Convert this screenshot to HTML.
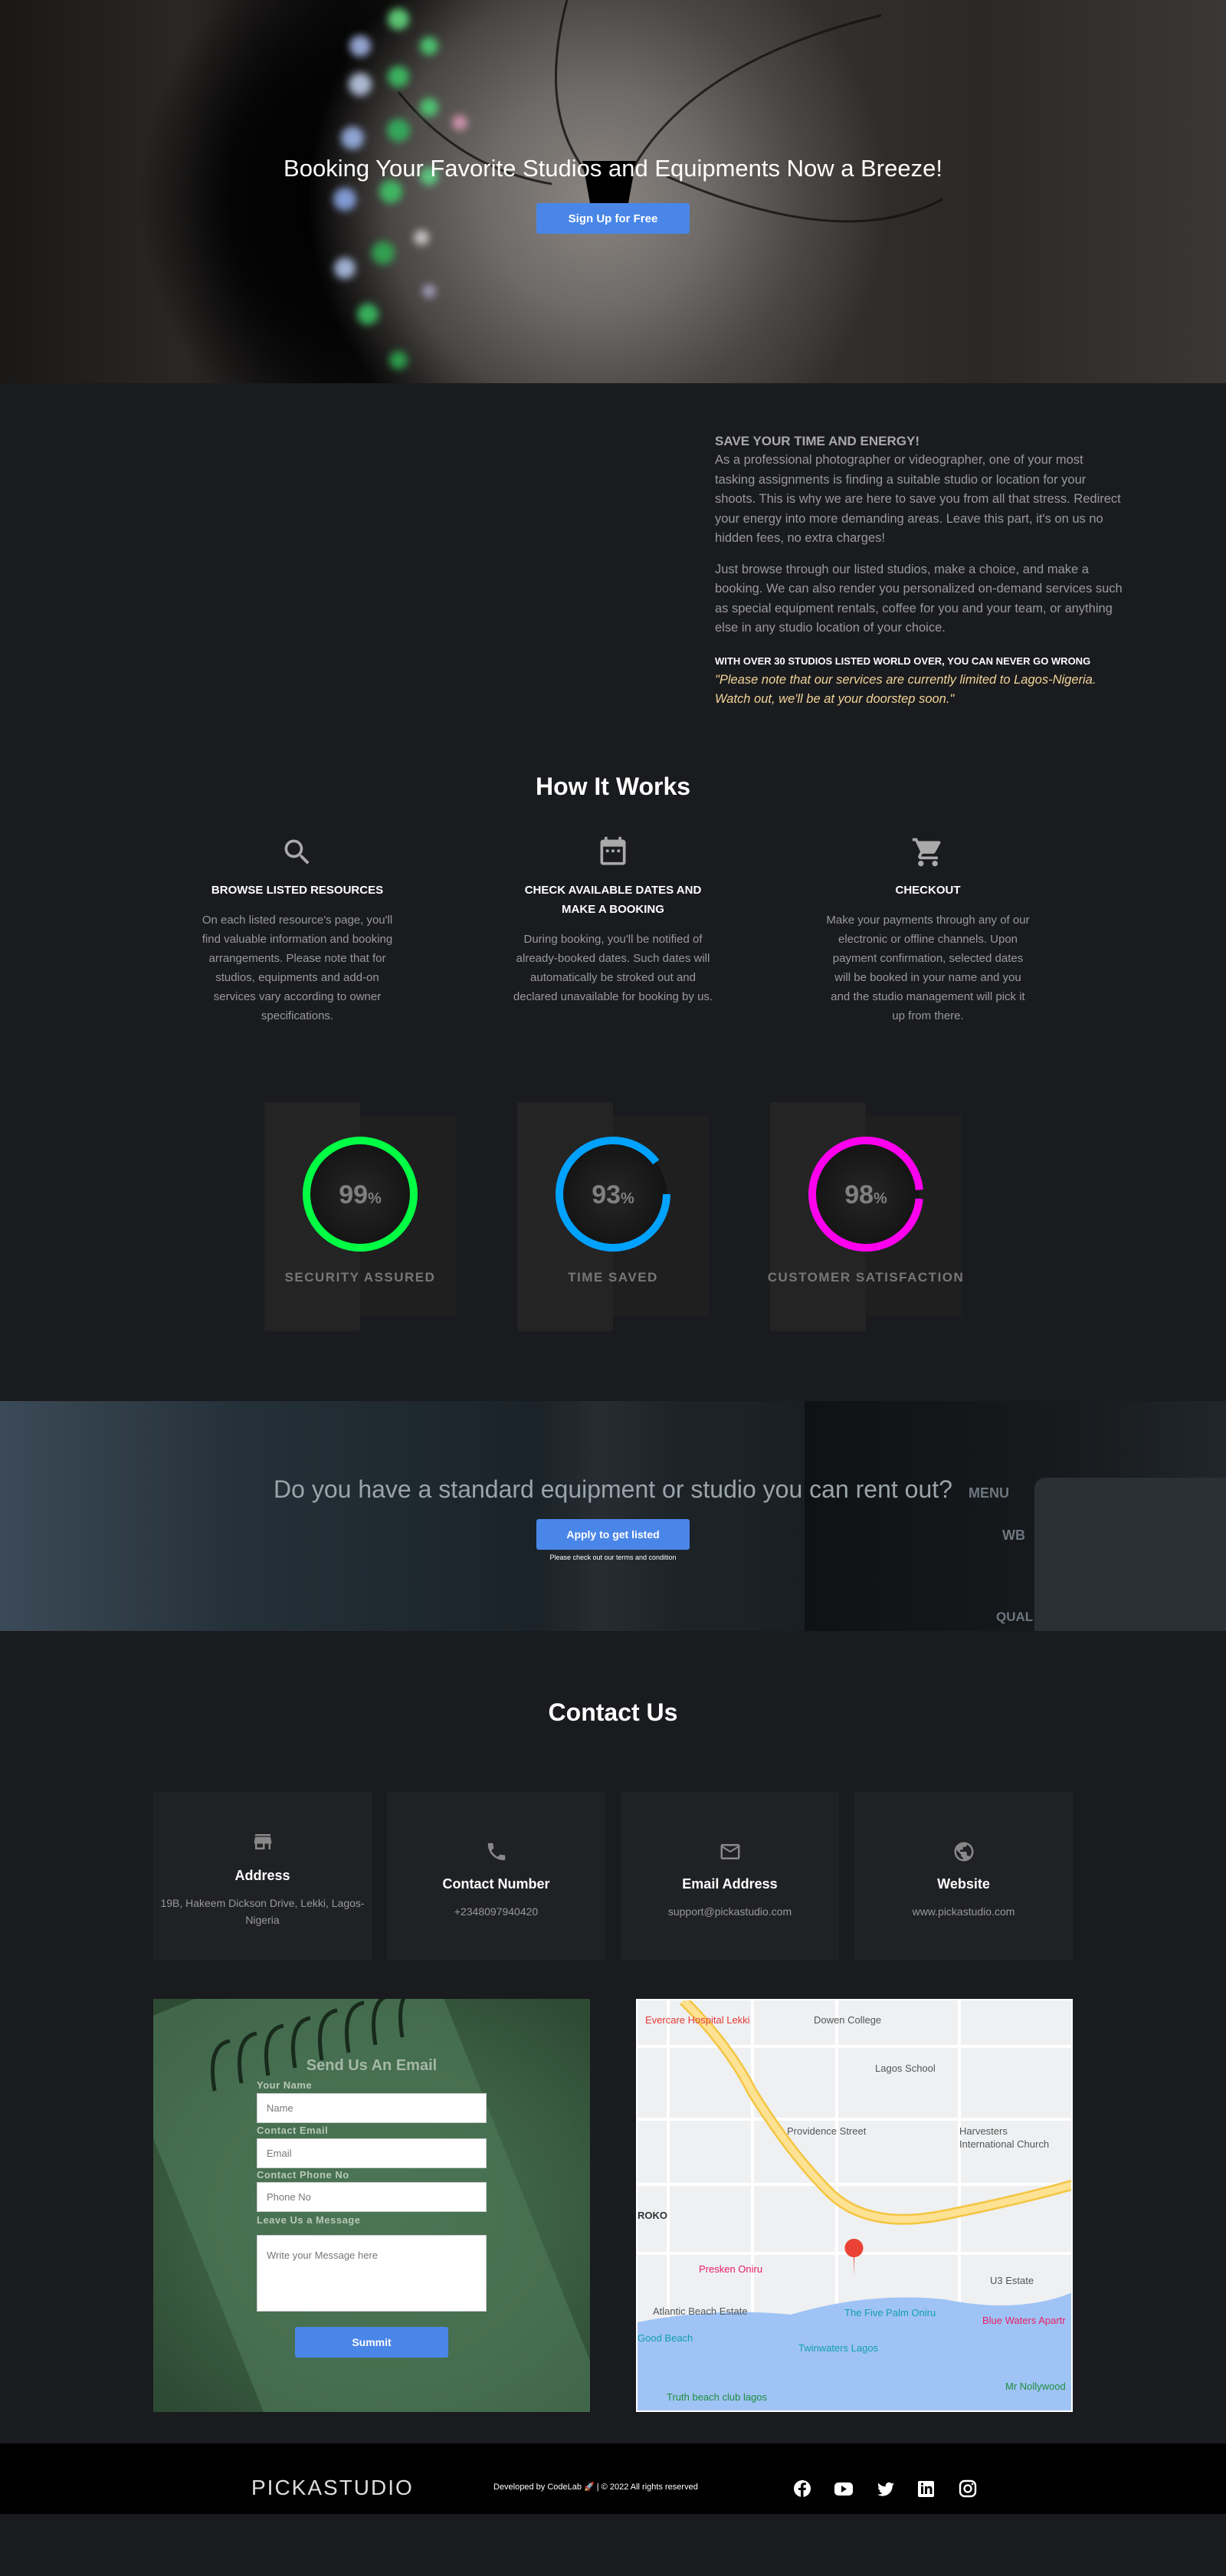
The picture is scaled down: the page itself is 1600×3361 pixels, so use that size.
<!DOCTYPE html>
<html><head><meta charset="utf-8"><style>
*{margin:0;padding:0;box-sizing:border-box}
body{width:1600px;height:3361px;background:#1a1b1e;font-family:"Liberation Sans",sans-serif;position:relative;overflow:hidden;color:#aaa}
.a{position:absolute}
.c{text-align:center}
.btn{position:absolute;background:#4a86e8;color:#fff;font-weight:bold;border-radius:3px;display:flex;align-items:center;justify-content:center;font-size:14px}
.hero{left:0;top:0;width:1600px;height:500px;overflow:hidden;
background:
radial-gradient(ellipse 420px 420px at 780px 260px,#8a8581 0%,#6e6a67 35%,#4a4644 65%,transparent 90%),
radial-gradient(ellipse 300px 330px at 480px 260px,#000 0%,#050505 60%,transparent 100%),
linear-gradient(90deg,#1a1816 0%,#2a2725 15%,#0d0c0c 28%,#3a3634 55%,#2b2826 80%,#3b3735 100%);}
.p{font-size:16.5px;line-height:25.5px;color:#999}
.col h4{color:#fff;font-size:15px;font-weight:bold;line-height:25px;margin-top:10px}
.col p{font-size:15px;line-height:25px;color:#999;margin-top:14px}
.card{position:absolute;top:2338px;width:285px;height:220px;background:#202124;text-align:center}
.card h5{color:#fff;font-size:18px;font-weight:bold}
.card p{color:#999;font-size:14px;line-height:22px;margin-top:14px}
.lbl{position:absolute;left:335px;font-size:13px;font-weight:bold;color:#b8c8b8;letter-spacing:.5px}
.in{position:absolute;left:335px;width:300px;background:#fff;border:1px solid #ccc;font-size:13px;color:#777;padding:0 12px;display:flex;align-items:center}
</style></head><body>

<div class="a hero">
 <svg width="1600" height="500" style="position:absolute;left:0;top:0">
  <defs><filter id="bl"><feGaussianBlur stdDeviation="5"/></filter></defs>
  <g fill="none" stroke="#111" stroke-width="3" opacity=".8">
   <path d="M740 0 Q700 150 770 230"/><path d="M1150 20 Q900 80 820 230"/><path d="M520 120 Q600 220 720 240"/><path d="M870 230 Q1100 330 1230 260"/>
  </g>
  <path d="M760 210 L830 210 L820 265 L770 265Z" fill="#000"/>
  <g opacity=".8" filter="url(#bl)">
   <circle cx="520" cy="25" r="14" fill="#6cf08a"/><circle cx="560" cy="60" r="12" fill="#4fe07a"/><circle cx="470" cy="60" r="14" fill="#b6c8ff"/>
   <circle cx="520" cy="100" r="14" fill="#3ed26a"/><circle cx="470" cy="110" r="15" fill="#d0e0ff"/><circle cx="560" cy="140" r="12" fill="#4fe07a"/>
   <circle cx="520" cy="170" r="15" fill="#2ec060"/><circle cx="460" cy="180" r="15" fill="#aac4ff"/><circle cx="600" cy="160" r="10" fill="#e8a0c0"/>
   <circle cx="510" cy="250" r="15" fill="#3ed26a"/><circle cx="450" cy="260" r="15" fill="#9ab8ff"/><circle cx="560" cy="230" r="12" fill="#5ee08a"/>
   <circle cx="500" cy="330" r="15" fill="#2eb855"/><circle cx="450" cy="350" r="14" fill="#c0d4ff"/><circle cx="550" cy="310" r="10" fill="#ddd"/>
   <circle cx="480" cy="410" r="14" fill="#3ed26a"/><circle cx="520" cy="470" r="12" fill="#2eb855"/><circle cx="560" cy="380" r="9" fill="#aac"/>
  </g>
 </svg>
 <div class="a c" style="left:0;width:1600px;top:202px;font-size:31px;color:#fff">Booking Your Favorite Studios and Equipments Now a Breeze!</div>
 <div class="btn" style="left:700px;top:265px;width:200px;height:40px;font-size:15px">Sign Up for Free</div>
</div>

<div class="a" style="left:933px;top:564px;width:535px">
 <div style="font-size:17px;font-weight:bold;color:#aaa;line-height:24px">SAVE YOUR TIME AND ENERGY!</div>
 <p class="p">As a professional photographer or videographer, one of your most tasking assignments is finding a suitable studio or location for your shoots. This is why we are here to save you from all that stress. Redirect your energy into more demanding areas. Leave this part, it's on us no hidden fees, no extra charges!</p>
 <p class="p" style="margin-top:15px">Just browse through our listed studios, make a choice, and make a booking. We can also render you personalized on-demand services such as special equipment rentals, coffee for you and your team, or anything else in any studio location of your choice.</p>
 <p style="margin-top:17px;font-size:13px;font-weight:bold;color:#fff;line-height:25px">WITH OVER 30 STUDIOS LISTED WORLD OVER, YOU CAN NEVER GO WRONG</p>
 <p class="p" style="font-style:italic;color:#f2d49a">"Please note that our services are currently limited to Lagos-Nigeria. Watch out, we'll be at your doorstep soon."</p>
</div>

<div class="a c" style="left:0;width:1600px;top:1008px;font-size:32px;font-weight:bold;color:#fff">How It Works</div>

<div class="a c col" style="left:258px;top:1090px;width:260px">
 <svg width="44" height="44" viewBox="0 0 24 24"><path fill="#aaa" d="M15.5 14h-.79l-.28-.27A6.47 6.47 0 0 0 16 9.5 6.5 6.5 0 1 0 9.5 16c1.61 0 3.09-.59 4.23-1.57l.27.28v.79l5 4.99L20.49 19l-4.99-5zm-6 0C7.010 14 5 11.99 5 9.5S7.01 5 9.5 5 14 7.01 14 9.5 11.99 14 9.5 14z"/></svg>
 <h4>BROWSE LISTED RESOURCES</h4>
 <p>On each listed resource's page, you'll find valuable information and booking arrangements. Please note that for studios, equipments and add-on services vary according to owner specifications.</p>
</div>
<div class="a c col" style="left:665px;top:1090px;width:270px">
 <svg width="44" height="44" viewBox="0 0 24 24"><path fill="#aaa" d="M19 3h-1V1h-2v2H8V1H6v2H5c-1.1 0-2 .9-2 2v14c0 1.1.9 2 2 2h14c1.1 0 2-.9 2-2V5c0-1.1-.9-2-2-2zm0 16H5V8h14v11zM7 10h2v2H7zm4 0h2v2h-2zm4 0h2v2h-2z"/></svg>
 <h4>CHECK AVAILABLE DATES AND MAKE A BOOKING</h4>
 <p>During booking, you'll be notified of already-booked dates. Such dates will automatically be stroked out and declared unavailable for booking by us.</p>
</div>
<div class="a c col" style="left:1076px;top:1090px;width:270px">
 <svg width="44" height="44" viewBox="0 0 24 24"><path fill="#aaa" d="M7 18c-1.1 0-1.99.9-1.99 2S5.9 22 7 22s2-.9 2-2-.9-2-2-2zM1 2v2h2l3.6 7.59-1.35 2.45c-.16.28-.25.61-.25.96 0 1.1.9 2 2 2h12v-2H7.42c-.14 0-.25-.11-.25-.25l.03-.12.9-1.63h7.45c.75 0 1.410-.41 1.75-1.03l3.58-6.49A1 1 0 0 0 20 4H5.21l-.94-2H1zm16 16c-1.1 0-1.99.9-1.99 2s.89 2 1.99 2 2-.9 2-2-.9-2-2-2z"/></svg>
 <h4>CHECKOUT</h4>
 <p>Make your payments through any of our electronic or offline channels. Upon payment confirmation, selected dates will be booked in your name and you and the studio management will pick it up from there.</p>
</div>

<!-- stats -->
<div class="a" style="left:345px;top:1438px;width:125px;height:299px;background:#242424;border-radius:3px"></div>
<div class="a" style="left:470px;top:1455px;width:125px;height:262px;background:#1f1f20"></div>
<div class="a" style="left:675px;top:1438px;width:125px;height:299px;background:#242424;border-radius:3px"></div>
<div class="a" style="left:800px;top:1455px;width:125px;height:262px;background:#1f1f20"></div>
<div class="a" style="left:1005px;top:1438px;width:125px;height:299px;background:#242424;border-radius:3px"></div>
<div class="a" style="left:1130px;top:1455px;width:125px;height:262px;background:#1f1f20"></div>
<svg class="a" style="left:0;top:1470px" width="1600" height="180">
 <defs><radialGradient id="g"><stop offset="0" stop-color="#262626"/><stop offset="1" stop-color="#141414"/></radialGradient></defs>
 <circle cx="470" cy="88" r="70" fill="url(#g)" stroke="#00ff44" stroke-width="10"/>
 <circle cx="800" cy="88" r="70" fill="url(#g)"/>
 <circle cx="800" cy="88" r="70" fill="none" stroke="#00a2ff" stroke-width="10" stroke-dasharray="395 45" transform="rotate(0 800 88)"/>
 <circle cx="1130" cy="88" r="70" fill="url(#g)"/>
 <circle cx="1130" cy="88" r="70" fill="none" stroke="#ff00ee" stroke-width="10" stroke-dasharray="428 12" transform="rotate(5 1130 88)"/>
 <g font-family="Liberation Sans" font-weight="bold" fill="#808080" text-anchor="middle">
  <text x="470" y="100"><tspan font-size="34">99</tspan><tspan font-size="20">%</tspan></text>
  <text x="800" y="100"><tspan font-size="34">93</tspan><tspan font-size="20">%</tspan></text>
  <text x="1130" y="100"><tspan font-size="34">98</tspan><tspan font-size="20">%</tspan></text>
 </g>
</svg>
<div class="a c" style="left:370px;width:200px;top:1657px;font-size:17px;font-weight:bold;color:#777;letter-spacing:1.5px">SECURITY ASSURED</div>
<div class="a c" style="left:700px;width:200px;top:1657px;font-size:17px;font-weight:bold;color:#777;letter-spacing:1.5px">TIME SAVED</div>
<div class="a c" style="left:990px;width:280px;top:1657px;font-size:17px;font-weight:bold;color:#777;letter-spacing:1.5px">CUSTOMER SATISFACTION</div>

<!-- CTA -->
<div class="a" style="left:0;top:1828px;width:1600px;height:300px;overflow:hidden;background:linear-gradient(90deg,#3b4a57 0%,#243038 20%,#1a2228 45%,#1c2226 60%,#14181b 75%,#1c2024 100%)">
 <div class="a" style="left:1050px;top:0;width:550px;height:300px;background:linear-gradient(90deg,#0f1214,#171a1d 60%,#20262a)"></div>
 <div class="a" style="left:1350px;top:100px;width:250px;height:200px;background:#2a3035;border-radius:14px 0 0 0"></div>
 <div class="a" style="left:700px;top:0;width:200px;height:300px;background:linear-gradient(90deg,transparent,#2c3136 40%,transparent);opacity:.7"></div>
 <div class="a" style="left:1264px;top:110px;font-size:18px;font-weight:bold;color:#6d7780">MENU</div>
 <div class="a" style="left:1308px;top:165px;font-size:18px;font-weight:bold;color:#6d7780">WB</div>
 <div class="a" style="left:1300px;top:272px;font-size:17px;font-weight:bold;color:#6d7780">QUAL</div>
 <div class="a c" style="left:0;width:1600px;top:97px;font-size:32px;color:#9aa4aa">Do you have a standard equipment or studio you can rent out?</div>
 <div class="btn" style="left:700px;top:154px;width:200px;height:40px">Apply to get listed</div>
 <div class="a c" style="left:0;width:1600px;top:199px;font-size:9px;color:#fff">Please check out our terms and condition</div>
</div>

<div class="a c" style="left:0;width:1600px;top:2216px;font-size:32px;font-weight:bold;color:#fff">Contact Us</div>

<div class="card" style="left:200px"><svg style="margin-top:50px" width="30" height="30" viewBox="0 0 24 24"><path fill="#888" d="M20 4H4v2h16V4zm1 10v-2l-1-5H4l-1 5v2h1v6h10v-6h4v6h2v-6h1zm-9 4H6v-4h6v4z"/></svg><h5 style="margin-top:14px">Address</h5><p>19B, Hakeem Dickson Drive, Lekki, Lagos-<br>Nigeria</p></div>
<div class="card" style="left:505px"><svg style="margin-top:63px" width="30" height="30" viewBox="0 0 24 24"><path fill="#888" d="M6.62 10.79c1.44 2.83 3.76 5.14 6.59 6.59l2.2-2.2c.27-.27.67-.36 1.02-.24 1.12.37 2.330.57 3.57.57.55 0 1 .45 1 1V20c0 .55-.45 1-1 1C10.61 21 3 13.39 3 4c0-.55.45-1 1-1h3.5c.55 0 1 .45 1 1 0 1.25.2 2.45.57 3.57.11.35.03.74-.25 1.02l-2.2 2.2z"/></svg><h5 style="margin-top:12px">Contact Number</h5><p>+2348097940420</p></div>
<div class="card" style="left:810px"><svg style="margin-top:63px" width="30" height="30" viewBox="0 0 24 24"><path fill="#888" d="M20 4H4c-1.1 0-2 .9-2 2v12c0 1.1.9 2 2 2h16c1.1 0 2-.9 2-2V6c0-1.1-.9-2-2-2zm0 14H4V8l8 5 8-5v10zm-8-7L4 6h16l-8 5z"/></svg><h5 style="margin-top:12px">Email Address</h5><p>support@pickastudio.com</p></div>
<div class="card" style="left:1115px"><svg style="margin-top:63px" width="30" height="30" viewBox="0 0 24 24"><path fill="#888" d="M12 2C6.48 2 2 6.48 2 12s4.48 10 10 10 10-4.48 10-10S17.52 2 12 2zm-1 17.93c-3.95-.49-7-3.85-7-7.93 0-.62.08-1.21.21-1.79L9 15v1c0 1.1.9 2 2 2v1.93zm6.9-2.54c-.26-.81-1-1.39-1.9-1.39h-1v-3c0-.55-.45-1-1-1H8v-2h2c.55 0 1-.45 1-1V7h2c1.1 0 2-.9 2-2v-.41c2.93 1.19 5 4.06 5 7.41 0 2.08-.8 3.97-2.1 5.39z"/></svg><h5 style="margin-top:12px">Website</h5><p>www.pickastudio.com</p></div>

<!-- form -->
<div class="a" style="left:200px;top:2608px;width:570px;height:539px;overflow:hidden;background:radial-gradient(ellipse 400px 350px at 300px 280px,#47704f,#3b5e42 60%,#2d4a33)">
 <div class="a" style="left:60px;top:-60px;width:420px;height:700px;background:#4f7a5a;transform:rotate(-22deg);opacity:.6"></div>
 <svg class="a" style="left:40px;top:0" width="400" height="130"><g stroke="#182a1c" stroke-width="5" fill="none">
  <path d="M40 120 Q30 60 60 55"/><path d="M75 110 Q65 50 95 45"/><path d="M110 100 Q100 40 130 35"/><path d="M145 90 Q135 30 165 25"/><path d="M180 80 Q170 20 200 15"/><path d="M215 70 Q205 10 235 5"/><path d="M250 60 Q240 0 270 -5"/><path d="M285 50 Q275 -10 305 -15"/></g></svg>
</div>
<div class="a c" style="left:200px;width:570px;top:2684px;font-size:20px;font-weight:bold;color:#a5b8a8">Send Us An Email</div>
<div class="lbl" style="top:2713px">Your Name</div>
<div class="in" style="top:2731px;height:39px">Name</div>
<div class="lbl" style="top:2772px">Contact Email</div>
<div class="in" style="top:2790px;height:39px">Email</div>
<div class="lbl" style="top:2830px">Contact Phone No</div>
<div class="in" style="top:2847px;height:39px">Phone No</div>
<div class="lbl" style="top:2889px">Leave Us a Message</div>
<div class="in" style="top:2916px;height:100px;align-items:flex-start;padding-top:18px">Write your Message here</div>
<div class="btn" style="left:385px;top:3036px;width:200px;height:40px">Summit</div>

<!-- map -->
<div class="a" style="left:830px;top:2608px;width:570px;height:539px;background:#eef0f2;overflow:hidden;border:2px solid #fff">
 <svg width="570" height="539" style="position:absolute;left:0;top:0">
  <g stroke="#fff" stroke-width="4" fill="none"><path d="M0 60 H570"/><path d="M0 155 H570"/><path d="M0 240 H570"/><path d="M0 330 H570"/><path d="M150 0 V420"/><path d="M260 0 V420"/><path d="M420 0 V420"/><path d="M40 0 V420"/></g>
  <path d="M60 0 Q120 60 150 120 Q200 200 250 250 Q300 300 400 280 Q500 260 570 240" stroke="#f5c542" stroke-width="14" fill="none"/>
  <path d="M60 0 Q120 60 150 120 Q200 200 250 250 Q300 300 400 280 Q500 260 570 240" stroke="#fde293" stroke-width="9" fill="none"/>
  <path d="M0 420 Q100 400 200 410 Q300 380 400 390 Q500 410 570 380 V539 H0Z" fill="#9fc3f5"/>
  <path d="M282 335 a12 12 0 1 1 1 0 L282 360Z" fill="#ea4335"/>
  <g font-family="Liberation Sans" font-size="13"><text x="10" y="30" fill="#e53935">Evercare Hospital Lekki</text><text x="230" y="30" fill="#555">Dowen College</text><text x="310" y="93" fill="#555">Lagos School</text><text x="195" y="175" fill="#555">Providence Street</text><text x="420" y="175" fill="#555">Harvesters</text><text x="420" y="192" fill="#555">International Church</text><text x="80" y="355" fill="#e91e63">Presken Oniru</text><text x="20" y="410" fill="#555">Atlantic Beach Estate</text><text x="270" y="412" fill="#129eaf">The Five Palm Oniru</text><text x="210" y="458" fill="#129eaf">Twinwaters Lagos</text><text x="450" y="422" fill="#e91e63">Blue Waters Apartr</text><text x="38" y="522" fill="#1e8e3e">Truth beach club lagos</text><text x="460" y="370" fill="#555">U3 Estate</text><text x="0" y="285" fill="#333" font-weight="bold">ROKO</text><text x="0" y="445" fill="#129eaf">Good Beach</text><text x="480" y="508" fill="#1e8e3e">Mr Nollywood</text></g>
 </svg>
</div>

<!-- footer -->
<div class="a" style="left:0;top:3188px;width:1600px;height:92px;background:#000">
 <div class="a" style="left:328px;top:42px;font-size:28px;color:#ddd;letter-spacing:2px">PICKASTUDIO</div>
 <div class="a" style="left:644px;top:50px;font-size:11px;color:#fff">Developed by CodeLab 🚀 | © 2022 All rights reserved</div>
 <svg class="a" style="left:1035px;top:46px" width="250" height="26" viewBox="0 0 250 26" fill="#fff">
  <circle cx="12" cy="13" r="11"/><path d="M13.5 24V15h3l.4-3.2h-3.4V9.8c0-.9.3-1.5 1.6-1.5h1.8V5.4c-.3 0-1.4-.1-2.6-.1-2.6 0-4.3 1.6-4.3 4.4v2.3H7V15h3V24z" fill="#000"/>
  <rect x="54" y="5" width="24" height="17" rx="5"/><path d="M63 9 L70 13.5 63 18Z" fill="#000"/>
  <path d="M132 7c-.8.4-1.7.6-2.6.7.9-.6 1.6-1.4 2-2.5-.9.5-1.9.9-2.9 1.1a4.5 4.5 0 0 0-7.7 4.1c-3.8-.2-7.1-2-9.3-4.7-.4.7-.6 1.4-.6 2.3 0 1.6.8 2.9 2 3.7-.7 0-1.4-.2-2-.6 0 2.2 1.6 4 3.6 4.4-.7.2-1.4.2-2 .1.6 1.8 2.2 3.1 4.2 3.1A9 9 0 0 1 110 20.6c2 1.3 4.4 2 6.9 2 8.3 0 12.8-6.9 12.8-12.8v-.6c.9-.6 1.6-1.4 2.3-2.2z"/>
  <rect x="163" y="3" width="21" height="21" rx="2"/><path d="M167 10h3v10h-3zM168.5 5.5a1.6 1.6 0 1 1 0 3.2 1.6 1.6 0 0 1 0-3.2zM172 10h3v1.4c.5-.9 1.6-1.6 3-1.6 3 0 3.5 1.9 3.5 4.4V20h-3v-5c0-1.2 0-2.6-1.6-2.6s-1.9 1.2-1.9 2.5V20h-3z" fill="#000"/>
  <rect x="218" y="3" width="20" height="20" rx="6" fill="none" stroke="#fff" stroke-width="2.4"/><circle cx="228" cy="13" r="4.5" fill="none" stroke="#fff" stroke-width="2.4"/><circle cx="234" cy="7" r="1.3"/>
 </svg>
</div>
</body></html>
